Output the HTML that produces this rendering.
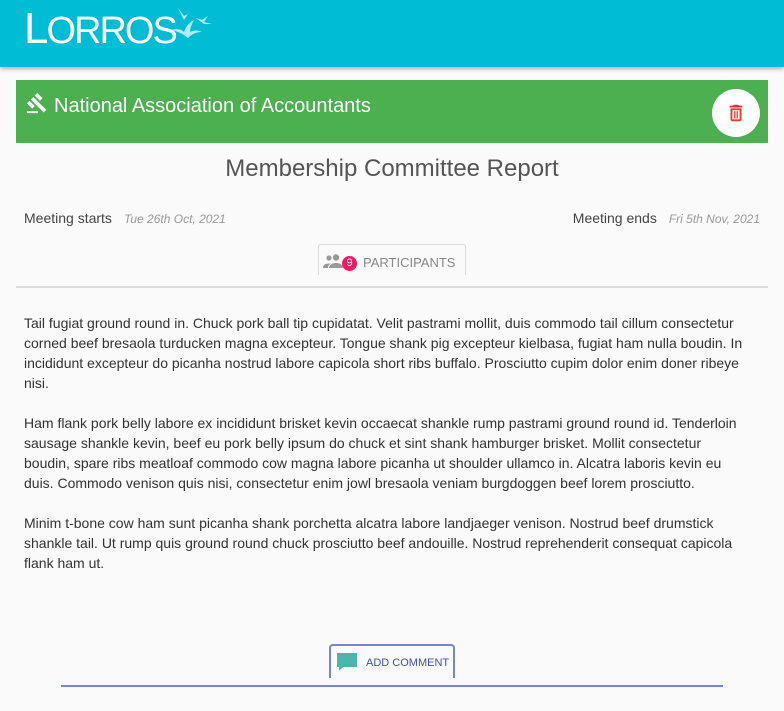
<!DOCTYPE html>
<html><head><style>
body{margin:0;width:784px;height:711px;background:#fafafa;font-family:"Liberation Sans",sans-serif;overflow:hidden;position:relative}
.hdr{position:absolute;left:0;top:0;width:784px;height:67px;background:#00bcd4;box-shadow:0 2px 4px rgba(0,0,0,.3)}
.logo{position:absolute;left:24px;top:4px;color:#fff;font-family:"Liberation Sans",sans-serif;font-size:44px;letter-spacing:-2px;font-weight:normal}
.logo .s{font-size:38px}
.bar{position:absolute;left:16px;top:80px;width:752px;height:63px;background:#4caf50}
.bar .t{position:absolute;left:38px;top:15px;color:#fff;font-size:20px}
.del{position:absolute;left:696px;top:9px;width:48px;height:48px;border-radius:50%;background:#fff}
h1{position:absolute;left:0;width:784px;top:155px;margin:0;text-align:center;font-weight:normal;font-size:24px;color:#555}
.m{position:absolute;top:210px;font-size:14px;color:#444}
.m i{font-size:12px;color:#999;margin-left:12px}
.pb{position:absolute;left:318px;top:244px;width:148px;height:31px;border:1px solid #ddd;border-bottom:none;border-radius:3px 3px 0 0;box-sizing:border-box}
.hr{position:absolute;left:16px;top:286px;width:752px;height:2px;background:#ddd}
.txt{position:absolute;left:24px;top:313px;width:736px;font-size:14px;line-height:20px;color:#333}
.txt p{margin:0 0 20px}
.ac{position:absolute;left:329px;top:644px;width:126px;height:34px;border:2px solid #7986cb;border-bottom:none;border-radius:4px 4px 0 0;box-sizing:border-box}
.line{position:absolute;left:61px;top:685px;width:662px;height:2px;background:#7986cb}
</style></head><body>
<div class="hdr"><div class="logo">L<span class="s">ORROS</span></div>
<svg style="position:absolute;left:170px;top:8px" width="44" height="40" viewBox="0 0 44 40" fill="#b2ebf2"><path d="M2 22c6-2 10 0 12 2 2-6 6-10 10-12-2 4-4 8-4 12 4-2 8-2 12 0-6 0-10 2-14 6-4-4-10-6-16-8z"/><path d="M8 0l6 8 4-2-4 6z"/><path d="M26 10l6 2 6-4-4 6 8 2-8 0z"/></svg>
</div>
<div class="bar">
<svg style="position:absolute;left:10px;top:12px" width="22" height="22" viewBox="0 0 24 24" fill="#fff"><path d="M1 21h12v2H1zM5.2 8.2l2.8-2.8 14.1 14.1-2.8 2.8zM12.3 1.1l5.7 5.7-2.8 2.8L9.5 4zM3.8 9.6l5.7 5.7-2.8 2.8L1 12.4z"/></svg>
<div class="t">National Association of Accountants</div>
<div class="del"><svg style="position:absolute;left:13px;top:12px" width="22" height="24" viewBox="0 0 24 24" fill="#e53935"><path d="M6 19c0 1.1.9 2 2 2h8c1.1 0 2-.9 2-2V7H6zm2-10h8v10H8zm7.5-5l-1-1h-5l-1 1H5v2h14V4z"/><rect x="10" y="10" width="1.4" height="8"/><rect x="12.6" y="10" width="1.4" height="8"/></svg></div>
</div>
<h1>Membership Committee Report</h1>
<div class="m" style="left:24px">Meeting starts<i>Tue 26th Oct, 2021</i></div>
<div class="m" style="right:24px">Meeting ends<i>Fri 5th Nov, 2021</i></div>
<div class="pb">
<svg style="position:absolute;left:4px;top:9px" width="20" height="14" viewBox="0 0 20 14" fill="#999"><circle cx="13" cy="3.5" r="3.2"/><circle cx="6" cy="4" r="2.6"/><path d="M6 14c0-3 3-5 7-5s7 2 7 5zM0 14c0-3 2-4.5 6-4.5 1 0 1.5.2 1.5.2C5.5 11 5 12.5 5 14z"/></svg>
<div style="position:absolute;left:23px;top:11px;width:15px;height:15px;border-radius:50%;background:#e91e63;color:#fff;font-size:11px;text-align:center;line-height:15px">9</div>
<div style="position:absolute;left:44px;top:10px;font-size:13px;color:#888">PARTICIPANTS</div>
</div>
<div class="hr"></div>
<div class="txt">
<p>Tail fugiat ground round in. Chuck pork ball tip cupidatat. Velit pastrami mollit, duis commodo tail cillum consectetur corned beef bresaola turducken magna excepteur. Tongue shank pig excepteur kielbasa, fugiat ham nulla boudin. In incididunt excepteur do picanha nostrud labore capicola short ribs buffalo. Prosciutto cupim dolor enim doner ribeye nisi.</p>
<p>Ham flank pork belly labore ex incididunt brisket kevin occaecat shankle rump pastrami ground round id. Tenderloin sausage shankle kevin, beef eu pork belly ipsum do chuck et sint shank hamburger brisket. Mollit consectetur<br>boudin, spare ribs meatloaf commodo cow magna labore picanha ut shoulder ullamco in. Alcatra laboris kevin eu<br>duis. Commodo venison quis nisi, consectetur enim jowl bresaola veniam burgdoggen beef lorem prosciutto.</p>
<p>Minim t-bone cow ham sunt picanha shank porchetta alcatra labore landjaeger venison. Nostrud beef drumstick shankle tail. Ut rump quis ground round chuck prosciutto beef andouille. Nostrud reprehenderit consequat capicola flank ham ut.</p>
</div>
<div class="ac">
<svg style="position:absolute;left:5px;top:6px" width="22" height="22" viewBox="0 0 22 22" fill="#4db6ac"><path d="M1 1h20v14H7l-4 4v-4H1z"/></svg>
<div style="position:absolute;left:35px;top:11px;font-size:11px;color:#3f51b5">ADD COMMENT</div>
</div>
<div class="line"></div>
</body></html>
